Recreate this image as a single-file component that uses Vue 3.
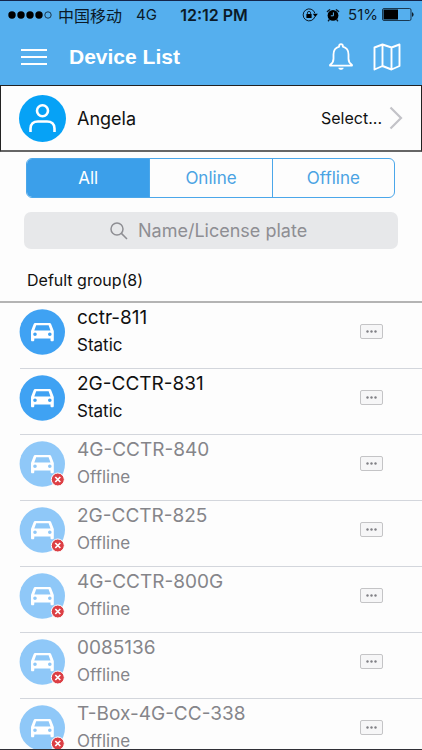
<script setup>
import { ref } from 'vue'

const tabs = ['All', 'Online', 'Offline']
const active = ref('All')
const query = ref('')
const devices = [
  { name: 'cctr-811', status: 'Static' },
  { name: '2G-CCTR-831', status: 'Static' },
  { name: '4G-CCTR-840', status: 'Offline' },
  { name: '2G-CCTR-825', status: 'Offline' },
  { name: '4G-CCTR-800G', status: 'Offline' },
  { name: '0085136', status: 'Offline' },
  { name: 'T-Box-4G-CC-338', status: 'Offline' }
]
</script>

<template>
  <div class="screen">
    <header class="top">
      <div class="status">
        <div class="side">
          <svg class="signal" width="44" height="8" viewBox="0 0 44 8" aria-hidden="true">
            <circle cx="4" cy="4" r="3.7" />
            <circle cx="13" cy="4" r="3.7" />
            <circle cx="22" cy="4" r="3.7" />
            <circle cx="31" cy="4" r="3.7" />
            <circle cx="40" cy="4" r="3.2" fill="none" stroke="#0b1a28" stroke-width="0.8" />
          </svg>
          <span class="carrier">中国移动</span>
          <span class="network">4G</span>
        </div>
        <span class="clock">12:12 PM</span>
        <div class="side right">
          <svg width="16" height="14" viewBox="0 0 16 14" aria-hidden="true">
            <path d="M12.9 8.6A6 6 0 1 1 12.9 5.2" fill="none" stroke="#0b1a28" stroke-width="1" />
            <path d="M10.8 5.8h5L13.3 9z" />
            <rect x="4.4" y="6.1" width="5.2" height="4" rx="0.4" />
            <path d="M5.4 6.4V5a1.6 1.6 0 0 1 3.2 0v1.4" fill="none" stroke="#0b1a28" stroke-width="0.9" />
          </svg>
          <svg class="alarm" width="14" height="14" viewBox="0 0 14 14" aria-hidden="true">
            <circle cx="7" cy="7.4" r="5.4" />
            <path d="M1.4 3.5 3.6 1.7M12.6 3.5 10.4 1.7M3.2 11.8l-.8.9M10.8 11.8l.8.9" fill="none" stroke="#0b1a28" stroke-width="1.4" stroke-linecap="round" />
            <path d="M7.4 4.4v3.4H4.8" fill="none" stroke="#55afee" stroke-width="1" />
          </svg>
          <span class="percent">51%</span>
          <svg width="32" height="13" viewBox="0 0 32 13" aria-hidden="true">
            <rect x="0.5" y="0.5" width="28.5" height="12" rx="1.5" fill="none" stroke="#0b1a28" stroke-width="0.8" />
            <rect x="1.5" y="1.5" width="14.5" height="10" />
            <path d="M30.2 4.2c1.7.6 1.7 4 0 4.6z" />
          </svg>
        </div>
      </div>
      <div class="nav">
        <button class="icon" aria-label="Menu">
          <svg width="28" height="18" viewBox="0 0 28 18">
            <path d="M1 2h26M1 9h26M1 16h26" stroke="#fff" stroke-width="2" />
          </svg>
        </button>
        <h1>Device List</h1>
        <button class="icon" aria-label="Notifications">
          <svg width="26" height="28" viewBox="0 0 26 28" fill="none" stroke="#fff" stroke-width="1.8" stroke-linejoin="round">
            <path d="M11.2 3.6a1.9 1.9 0 1 1 3.6 0c3.7.9 5.700 4 5.700 7.900v4.200c0 2.800 1.200 4.700 3.500 6.300v.6H2V22c2.300-1.600 3.500-3.500 3.500-6.300v-4.200c0-3.900 2-7 5.700-7.900z" />
            <path d="M10.300 24.700h5.400c-.3 1.400-1.300 2.100-2.700 2.100s-2.400-.7-2.700-2.100z" fill="#fff" stroke="none" />
          </svg>
        </button>
        <button class="icon" aria-label="Map">
          <svg width="28" height="28" viewBox="0 0 28 28" fill="none" stroke="#fff" stroke-width="1.9" stroke-linejoin="round">
            <path d="M1.500 4.500 9.500 1.500l9 3 8-3v21.500l-8 3.500-9-3.500-8 3.500zM9.500 1.500V23M18.500 4.500v22" />
          </svg>
        </button>
      </div>
    </header>

    <button class="account">
      <svg width="47" height="47" viewBox="0 0 47 47" aria-hidden="true">
        <circle cx="23.5" cy="23.500" r="23.500" fill="#06a2f6" />
        <g fill="none" stroke="#fff" stroke-width="2.600">
          <circle cx="23.500" cy="15.700" r="5.500" />
          <path d="M11.500 37v-3.500c0-4.500 3-7 7.500-7h9c4.500 0 7.500 2.500 7.500 7V37" />
        </g>
      </svg>
      <span class="user">Angela</span>
      <span class="select">Select...</span>
      <svg width="14" height="24" viewBox="0 0 14 24" aria-hidden="true">
        <path d="M1.500 1.500 12 12 1.500 22.500" fill="none" stroke="#c3c3c8" stroke-width="2.200" />
      </svg>
    </button>

    <main>
      <div class="tabs">
        <button v-for="tab in tabs" :key="tab" :class="{ on: active === tab }" @click="active = tab">{{ tab }}</button>
      </div>
      <label class="search">
        <svg width="18" height="18" viewBox="0 0 18 18" fill="none" stroke="#8e8e93" stroke-width="1.500" aria-hidden="true">
          <circle cx="7" cy="7" r="6" />
          <path d="m11.400 11.400 5.600 5.600" />
        </svg>
        <input v-model="query" type="text" placeholder="Name/License plate" aria-label="Name/License plate" />
      </label>
      <h2>Defult group(8)</h2>
      <ul>
        <li v-for="device in devices" :key="device.name" :class="{ off: device.status === 'Offline' }">
          <svg class="car" width="46" height="46" viewBox="0 0 46 46" aria-hidden="true">
            <circle class="disc" cx="23.300" cy="23" r="22.700" />
            <path fill="#fff" fill-rule="evenodd" d="M16.600 13.900h13.600c1 0 1.700.5 2 1.400l2.600 6.600v9c0 .8-.5 1.300-1.200 1.300h-.8c-.8 0-1.300-.5-1.300-1.300v-1.400H15.300v1.400c0 .8-.5 1.300-1.300 1.300h-.8c-.7 0-1.200-.5-1.200-1.300v-9l2.600-6.600c.3-.9 1-1.400 2-1.400zM17.200 16.200l-1.900 5.200h16.200l-1.900-5.200zM16 23.500a1.800 1.800 0 1 0 0 3.600 1.800 1.800 0 0 0 0-3.600zM30.800 23.500a1.800 1.800 0 1 0 0 3.600 1.800 1.800 0 0 0 0-3.600z" />
            <g v-if="device.status === 'Offline'">
              <circle cx="38.800" cy="38.500" r="6.500" fill="#dc3f45" stroke="#fff" stroke-width="1" />
              <path d="m36.300 36 5 5m0-5-5 5" stroke="#fff" stroke-width="1.700" />
            </g>
          </svg>
          <div class="info">
            <span class="name">{{ device.name }}</span>
            <span class="state">{{ device.status }}</span>
          </div>
          <button class="more" :aria-label="'More options for ' + device.name">
            <svg width="11" height="3" viewBox="0 0 11 3" fill="#808085">
              <circle cx="1.500" cy="1.500" r="1.200" />
              <circle cx="5.500" cy="1.500" r="1.200" />
              <circle cx="9.500" cy="1.500" r="1.200" />
            </svg>
          </button>
        </li>
      </ul>
    </main>
  </div>
</template>

<style>
body {
  background: #fdfdfd;
}
</style>

<style scoped>
.screen {
  box-sizing: border-box;
  height: 100vh;
  overflow: hidden;
  border-top: 1px solid #14254a;
  border-bottom: 1px solid #303036;
  background: #fdfdfd;
  color: #111;
  font-family: Inter, "Noto Sans CJK SC", sans-serif;
}
button {
  font: inherit;
  color: inherit;
  padding: 0;
  border: 0;
  background: none;
}
svg {
  display: block;
  flex: none;
}
.top {
  background: #55afee;
}
.status {
  display: flex;
  align-items: center;
  height: 27px;
  padding: 0 8px;
  color: #0b1a28;
  font-size: 15px;
}
.side {
  display: flex;
  flex: 1;
  align-items: center;
}
.right {
  justify-content: flex-end;
}
.signal {
  margin-right: 6px;
}
.carrier {
  font-size: 16px;
}
.network {
  margin-left: 14px;
}
.clock {
  padding-left: 6px;
  font-size: 16px;
  font-weight: 600;
}
.alarm {
  margin: 0 8px;
}
.percent {
  margin-right: 4px;
}
.nav {
  display: flex;
  align-items: center;
  height: 57px;
  padding: 0 21px 0 20px;
}
h1 {
  flex: 1;
  margin: 0 0 0 21px;
  color: #fff;
  font: bold 21px "Liberation Sans", sans-serif;
}
.nav .icon + .icon {
  margin-left: 19px;
}
.account {
  box-sizing: border-box;
  display: flex;
  align-items: center;
  width: 100%;
  height: 67px;
  padding: 0 18px;
  border: 1px solid #222;
  border-bottom: 2px solid #666;
  text-align: left;
}
.user {
  flex: 1;
  margin-left: 11px;
  font-size: 18px;
}
.select {
  margin-right: 7px;
  font-size: 16px;
}
.tabs {
  display: grid;
  grid-template-columns: repeat(3, 1fr);
  height: 38px;
  margin: 6px 27px 14px 26px;
  border: 1px solid #4ba7ea;
  border-radius: 6px;
  overflow: hidden;
  color: #4ba3e3;
  font-size: 17px;
}
.tabs button + button {
  border-left: 1px solid #4ba7ea;
}
.tabs .on {
  background: #3b9fea;
  color: #fff;
}
.search {
  display: flex;
  align-items: center;
  justify-content: center;
  gap: 10px;
  height: 37px;
  margin: 0 24px;
  border-radius: 7px;
  background: #e7e8ea;
}
.search input {
  width: 174px;
  padding: 0;
  border: 0;
  outline: 0;
  background: none;
  color: #333;
  font: 18px Inter, sans-serif;
}
.search input::placeholder {
  color: #8e8e93;
  opacity: 1;
}
h2 {
  margin: 0;
  padding: 19px 27px 9px;
  border-bottom: 2px solid #b4b4b4;
  font-size: 16px;
  font-weight: 400;
  line-height: 24px;
}
ul {
  margin: 0;
  padding: 0 0 0 20px;
  list-style: none;
}
li {
  box-sizing: border-box;
  display: flex;
  align-items: flex-start;
  height: 66px;
  padding: 6px 39px 0 0;
  border-bottom: 1px solid #d3d6dc;
}
.disc {
  fill: #3fa2f3;
}
.off .disc {
  fill: #8fc8f8;
}
.car {
  margin-left: -1px;
}
.info {
  display: flex;
  flex: 1;
  flex-direction: column;
  margin-left: 12px;
}
.name {
  margin-top: -5px;
  font-size: 19px;
  line-height: 28px;
}
.state {
  font-size: 17px;
  line-height: 26px;
}
.off .info {
  color: #85858a;
}
.more {
  box-sizing: border-box;
  display: flex;
  align-items: center;
  justify-content: center;
  width: 23px;
  height: 15px;
  margin-top: 15px;
  border: 1px solid #c4c4c6;
  border-radius: 2px;
  background: #f6f6f7;
}
</style>
